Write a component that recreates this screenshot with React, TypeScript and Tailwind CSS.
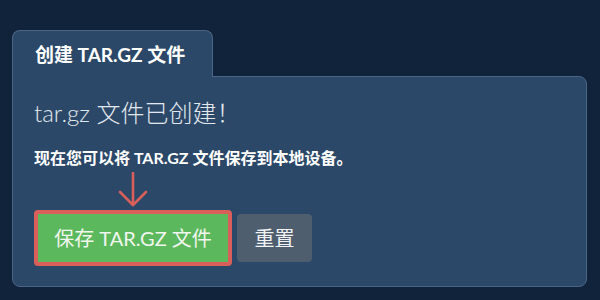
import React from 'react';

function ArrowDown() {
    return (
        <svg width="32" height="38" viewBox="0 0 32 38" fill="none" stroke="#d9605a" strokeWidth="2.6" strokeLinecap="round" strokeLinejoin="round">
            <path d="M16 1 V33" />
            <path d="M3 20 L16 33 L29 20" />
        </svg>
    );
}

export default function App() {
    return (
        <div
            className="w-[600px] h-[300px] bg-[#10233a] pt-[30px] pl-[12px] pr-[13px] overflow-hidden"
            style={{ fontFamily: 'Lato, "Noto Sans CJK SC", sans-serif' }}
        >
            {/* tab */}
            <div className="w-[201px] h-[47px] bg-[#2c4868] border border-b-0 border-[#4b6586] rounded-t-[8px] pl-[22px] pt-[12px] -mb-px relative z-10">
                <div className="text-white font-bold text-[19px] leading-[24px] whitespace-nowrap">创建 TAR.GZ 文件</div>
            </div>

            {/* panel */}
            <div className="h-[211px] bg-[#2c4868] border border-[#4b6586] rounded-b-[8px] rounded-tr-[8px] px-[21px] pt-[22px]">
                <h2 className="text-[#e2e8ee] font-light text-[24px] leading-[28px]">tar.gz 文件已创建！</h2>
                <p className="text-white font-bold text-[16px] leading-[20px] mt-[21px]">现在您可以将 TAR.GZ 文件保存到本地设备。</p>

                <div className="flex justify-start pl-[83px] mt-[4px]">
                    <ArrowDown />
                </div>

                <div className="flex items-center gap-[5px]">
                    <button className="h-[56px] w-[198px] border-4 border-[#d9605a] rounded-[4px] bg-[#5cb85c] text-[#f1f6ef] text-[20px] flex items-center justify-center whitespace-nowrap">
                        保存 TAR.GZ 文件
                    </button>
                    <button className="h-[48px] w-[75px] rounded-[4px] bg-[#4f5e6e] text-[#f1f3f5] text-[20px] flex items-center justify-center">
                        重置
                    </button>
                </div>
            </div>
        </div>
    );
}
